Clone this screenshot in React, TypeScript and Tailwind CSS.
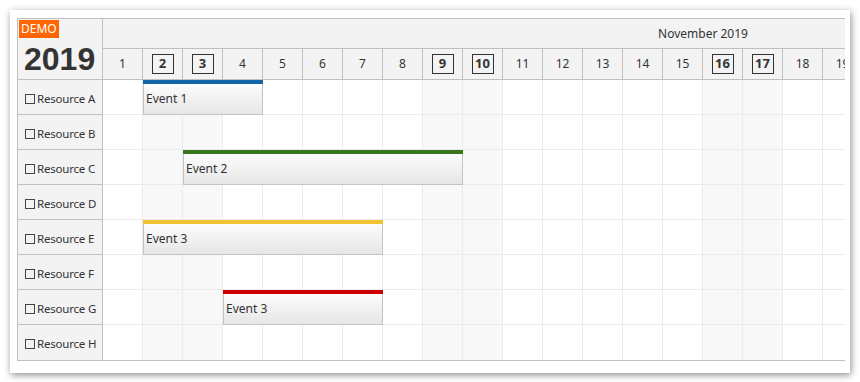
const DAYS = Array.from({ length: 30 }, (_, i) => i + 1);
const WEEKEND = new Set([2, 3, 9, 10, 16, 17, 23, 24, 30]);
const RESOURCES = ["A", "B", "C", "D", "E", "F", "G", "H"];

type Ev = { row: number; start: number; days: number; text: string; bar: string };

const EVENTS: Ev[] = [
  { row: 0, start: 2, days: 3, text: "Event 1", bar: "bg-[#1066a8]" },
  { row: 2, start: 3, days: 7, text: "Event 2", bar: "bg-[#38761d]" },
  { row: 4, start: 2, days: 6, text: "Event 3", bar: "bg-[#f1c232]" },
  { row: 6, start: 4, days: 4, text: "Event 3", bar: "bg-[#cc0000]" },
];

const font = "font-['Noto_Sans',sans-serif]";

function ResourceCell({ name, last }: { name: string; last: boolean }) {
  return (
    <div
      className={`flex h-[35px] items-center gap-[2px] whitespace-nowrap bg-[#f3f3f3] pl-[7px] pt-[3px] text-[11.5px] tracking-[-0.2px] text-[#333] ${
        last ? "" : "border-b border-[#c0c0c0]"
      }`}
    >
      <span className="inline-block h-[10px] w-[10px] shrink-0 border border-[#444]" />
      <span>Resource {name}</span>
    </div>
  );
}

function EventBox({ ev }: { ev: Ev }) {
  return (
    <div
      className="absolute top-0 box-border flex h-[35px] flex-col border-x border-b border-[#c4c4c4] bg-gradient-to-b from-white to-[#e6e6e6]"
      style={{ left: (ev.start - 1) * 40, width: ev.days * 40 }}
    >
      <div className={`-mx-px h-[4px] ${ev.bar}`} />
      <div className="flex flex-1 items-center pl-[2px] text-[12px] text-[#333]">{ev.text}</div>
    </div>
  );
}

export default function App() {
  return (
    <div className={`h-[382px] w-[860px] bg-white p-[10px] ${font}`}>
      <div className="h-[363px] w-[840px] bg-white pl-[7px] pt-[8px] shadow-[1px_2px_7px_rgba(0,0,0,0.45)]">
        <div className="flex w-[828px] border-y border-l border-[#c0c0c0]">
          {/* Row headers */}
          <div className="w-[85px] shrink-0 border-r border-[#c0c0c0]">
            <div className="flex h-[61px] flex-col border-b border-[#c0c0c0] bg-[#f3f3f3] pl-[1px] pt-px">
              <span className="w-fit bg-[#ff6600] px-[2px] text-[12px] leading-[18px] text-white">DEMO</span>
              <span className="mt-[3px] pl-[5px] font-['Liberation_Sans',sans-serif] text-[32px] font-bold leading-[36px] text-[#333]">
                2019
              </span>
            </div>
            {RESOURCES.map((r, i) => (
              <ResourceCell key={r} name={r} last={i === RESOURCES.length - 1} />
            ))}
          </div>

          {/* Timeline */}
          <div className="min-w-0 flex-1 overflow-hidden">
            <div className="w-[1200px]">
              <div className="flex h-[30px] items-center justify-center border-b border-[#c0c0c0] bg-[#f3f3f3] text-[12px] text-[#333]">
                November 2019
              </div>
              <div className="flex h-[31px] border-b border-[#c0c0c0] bg-[#f3f3f3]">
                {DAYS.map((d) => (
                  <div
                    key={d}
                    className="flex h-full w-[40px] shrink-0 items-center justify-center border-r border-[#c0c0c0] text-[12px] text-[#333]"
                  >
                    {WEEKEND.has(d) ? (
                      <span className="flex h-[20px] w-[22px] items-center justify-center border border-[#333] text-[13px] font-bold">
                        {d}
                      </span>
                    ) : (
                      d
                    )}
                  </div>
                ))}
              </div>
              {RESOURCES.map((r, i) => (
                <div
                  key={r}
                  className={`relative flex h-[35px] ${i === RESOURCES.length - 1 ? "" : "border-b border-[#ebebeb]"}`}
                >
                  {DAYS.map((d) => (
                    <div
                      key={d}
                      className={`h-full w-[40px] shrink-0 border-r border-[#ebebeb] ${
                        WEEKEND.has(d) ? "bg-[#f8f8f8]" : "bg-white"
                      }`}
                    />
                  ))}
                  {EVENTS.filter((e) => e.row === i).map((e, k) => (
                    <EventBox key={k} ev={e} />
                  ))}
                </div>
              ))}
            </div>
          </div>
        </div>
      </div>
    </div>
  );
}
